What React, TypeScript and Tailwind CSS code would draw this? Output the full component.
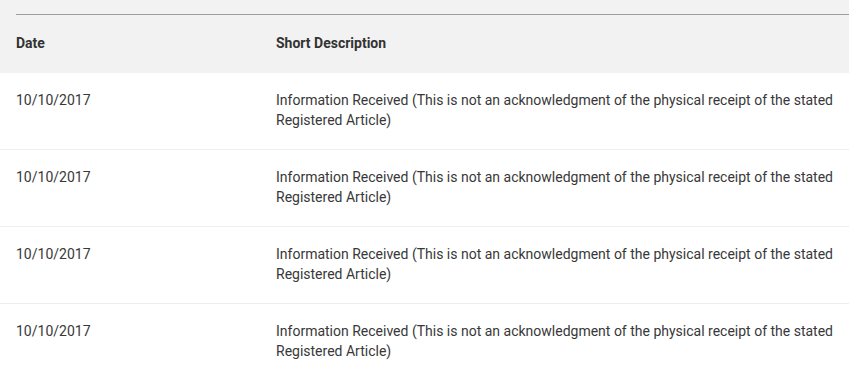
export default function App() {
  const rows = Array.from({ length: 4 }, () => ({
    date: "10/10/2017",
    desc: "Information Received (This is not an acknowledgment of the physical receipt of the stated Registered Article)",
  }));
  return (
    <div className="w-[849px] h-[372px] overflow-hidden bg-white text-[14px] text-[#383838]" style={{ fontFamily: "Roboto, 'Liberation Sans', sans-serif" }}>
      <div className="bg-[#f2f2f2] pt-[14px]">
        <div className="ml-[16px] border-t border-[#9e9e9e]" />
        <div className="grid grid-cols-[260px_1fr] h-[58px] items-center pb-[2px] pl-[16px] pr-[12px] font-bold leading-[20px] text-[#333333]">
          <div>Date</div>
          <div>Short Description</div>
        </div>
      </div>
      {rows.map((r, i) => (
        <div key={i} className="grid grid-cols-[260px_1fr] pl-[16px] pr-[12px] pt-[17px] pb-[19px] leading-[20px] border-b border-[#eeeeee]">
          <div>{r.date}</div>
          <div>{r.desc}</div>
        </div>
      ))}
    </div>
  );
}
